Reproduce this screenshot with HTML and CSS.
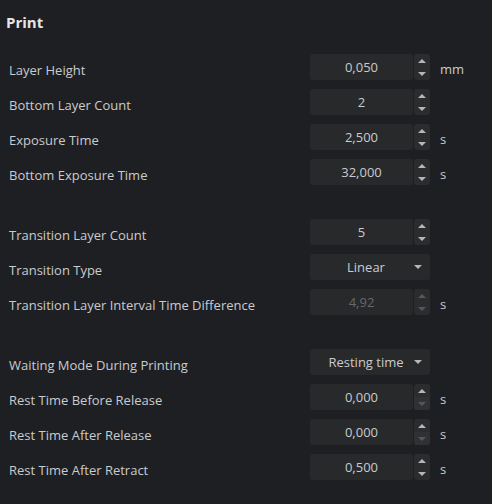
FILE: index.html
```html
<!DOCTYPE html>
<html lang="en">
<head>
  <meta charset="UTF-8" />
  <meta name="viewport" content="width=device-width, initial-scale=1.0" />
  <title>Print Settings</title>
  <link rel="stylesheet" href="styles.css">
</head>
<body>
  <div class="panel">
    <h2 class="title">Print</h2>

    <div class="group">
      <div class="row">
        <span class="label">Layer Height</span>
        <div class="field">0,050</div>
        <div class="spin"><span class="up"></span><span class="down"></span></div>
        <span class="unit">mm</span>
      </div>
      <div class="row">
        <span class="label">Bottom Layer Count</span>
        <div class="field">2</div>
        <div class="spin"><span class="up"></span><span class="down"></span></div>
        <span class="unit"></span>
      </div>
      <div class="row">
        <span class="label">Exposure Time</span>
        <div class="field">2,500</div>
        <div class="spin"><span class="up"></span><span class="down"></span></div>
        <span class="unit">s</span>
      </div>
      <div class="row">
        <span class="label">Bottom Exposure Time</span>
        <div class="field">32,000</div>
        <div class="spin"><span class="up"></span><span class="down"></span></div>
        <span class="unit">s</span>
      </div>
    </div>

    <div class="group">
      <div class="row">
        <span class="label">Transition Layer Count</span>
        <div class="field">5</div>
        <div class="spin"><span class="up"></span><span class="down"></span></div>
        <span class="unit"></span>
      </div>
      <div class="row">
        <span class="label">Transition Type</span>
        <div class="combo"><span class="combo-text">Linear</span><span class="caret"></span></div>
      </div>
      <div class="row disabled">
        <span class="label">Transition Layer Interval Time Difference</span>
        <div class="field">4,92</div>
        <div class="spin"><span class="up"></span><span class="down"></span></div>
        <span class="unit">s</span>
      </div>
    </div>

    <div class="group">
      <div class="row">
        <span class="label">Waiting Mode During Printing</span>
        <div class="combo"><span class="combo-text">Resting time</span><span class="caret"></span></div>
      </div>
      <div class="row">
        <span class="label">Rest Time Before Release</span>
        <div class="field">0,000</div>
        <div class="spin at-min"><span class="up"></span><span class="down"></span></div>
        <span class="unit">s</span>
      </div>
      <div class="row">
        <span class="label">Rest Time After Release</span>
        <div class="field">0,000</div>
        <div class="spin at-min"><span class="up"></span><span class="down"></span></div>
        <span class="unit">s</span>
      </div>
      <div class="row">
        <span class="label">Rest Time After Retract</span>
        <div class="field">0,500</div>
        <div class="spin"><span class="up"></span><span class="down"></span></div>
        <span class="unit">s</span>
      </div>
    </div>
  </div>
</body>
</html>
```

FILE: styles.css
```css
body {
  margin: 0;
  background: #1e1f22;
  font-family: 'Open Sans', 'Noto Sans', sans-serif;
  font-size: 13px;
  color: #c9cbcf;
}
.panel {
  width: 492px;
  height: 504px;
  box-sizing: border-box;
}
.title {
  margin: 0;
  padding: 12px 0 0 6px;
  height: 42px;
  box-sizing: border-box;
  font-size: 15px;
  font-weight: bold;
  color: #e6e6e6;
  line-height: 20px;
}
.group {
  display: flex;
  flex-direction: column;
  gap: 9px;
  margin-top: 12px;
}
.group + .group {
  margin-top: 34px;
}
.row {
  display: grid;
  grid-template-columns: 300px 103px 16px auto;
  column-gap: 1px;
  height: 26px;
  align-items: center;
  padding-left: 9px;
}
.label {
  white-space: nowrap;
  padding-top: 6px;
}
.field {
  height: 26px;
  line-height: 26px;
  background: #28292b;
  border-radius: 3px;
  text-align: center;
}
.spin {
  height: 26px;
  background: #2b2c2e;
  border-radius: 3px;
  display: flex;
  flex-direction: column;
  overflow: hidden;
}
.spin span {
  flex: 1;
  position: relative;
}
.spin span::after {
  content: '';
  position: absolute;
  left: 50%;
  top: 50%;
  margin-left: -4px;
  border-left: 4px solid transparent;
  border-right: 4px solid transparent;
}
.spin .up::after {
  margin-top: -2px;
  border-bottom: 4px solid #b4b6ba;
}
.spin .down::after {
  margin-top: -2px;
  border-top: 4px solid #b4b6ba;
}
.spin.at-min .down {
  background: #303133;
}
.spin.at-min .down::after {
  border-top-color: #55575a;
}
.unit {
  padding-left: 9px;
  padding-top: 4px;
}
.combo {
  grid-column: 2 / 4;
  height: 26px;
  background: #28292b;
  border-radius: 3px;
  display: flex;
  align-items: center;
  position: relative;
}
.combo-text {
  flex: 1;
  text-align: center;
  padding-right: 12px;
  padding-left: 4px;
}
.caret {
  position: absolute;
  right: 8px;
  top: 11px;
  border-left: 4px solid transparent;
  border-right: 4px solid transparent;
  border-top: 4px solid #b4b6ba;
}
.disabled .field {
  color: #66686b;
}
.disabled .spin .up::after {
  border-bottom-color: #55575a;
}
.disabled .spin .down::after {
  border-top-color: #55575a;
}
```
